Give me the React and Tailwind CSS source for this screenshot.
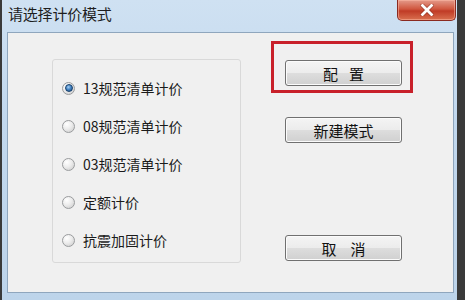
import React from "react";

const font = { fontFamily: '"Noto Sans CJK SC", "Noto Sans", sans-serif' };

function Radio({ checked, label }) {
  return (
    <div className="flex items-center h-[20px]">
      <div className="w-[13px] h-[13px] rounded-full border border-[#9a9c9e] bg-[radial-gradient(circle_at_35%_30%,#ffffff_0%,#ececec_45%,#c9c9c9_100%)] flex items-center justify-center shrink-0">
        {checked && (
          <div className="w-[8px] h-[8px] rounded-full border border-[#163f6a] bg-[radial-gradient(circle_at_40%_35%,#a8d0f4_0%,#4686c6_45%,#1c4b7e_100%)]" />
        )}
      </div>
      <span className="ml-[8px] text-[14px] text-[#1b1b1b] leading-none">{label}</span>
    </div>
  );
}

function Btn({ children, className = "" }) {
  return (
    <div
      className={
        "w-[117px] h-[26px] rounded-[3px] border border-[#707070] bg-[linear-gradient(to_bottom,#f4f4f4_0%,#ececec_48%,#dddddd_52%,#d0d0d0_100%)] shadow-[inset_0_0_0_1px_#fbfbfb] flex items-center justify-center text-[15px] text-[#111] leading-none " +
        className
      }
    >
      {children}
    </div>
  );
}

export default function App() {
  return (
    <div className="w-[465px] h-[300px] flex bg-[#3a3a3a] overflow-hidden" style={font}>
      <div className="w-[2px] bg-[#3a3a3a]" />
      <div className="w-[455px] h-[300px] flex flex-col bg-[linear-gradient(to_bottom,#cfe1f2_0%,#c2d8ee_40%,#bdd4ea_100%)] relative">
        {/* title bar */}
        <div className="h-[31px] flex items-start justify-between">
          <div className="pl-[6px] pt-[6px] text-[15px] text-[#1e1e1e] leading-none tracking-[-0.2px]">请选择计价模式</div>
          <div className="mr-[1px] w-[59px] h-[21px] rounded-b-[5px] border border-t-0 border-[#8a2a20] bg-[linear-gradient(to_bottom,#e49a8a_0%,#d0573f_45%,#c03b26_55%,#d9704f_100%)] shadow-[inset_0_0_0_1px_rgba(255,190,170,0.5)] flex items-center justify-center">
            <svg width="14" height="12" viewBox="0 0 14 12">
              <path d="M2.5 1.5 L11.5 10.5 M11.5 1.5 L2.5 10.5" stroke="#7a2418" strokeWidth="4.2" strokeLinecap="square" opacity="0.55" />
              <path d="M2.5 1.5 L11.5 10.5 M11.5 1.5 L2.5 10.5" stroke="#ffffff" strokeWidth="2.8" strokeLinecap="square" />
            </svg>
          </div>
        </div>
        {/* content */}
        <div className="ml-[5px] mr-[3px] mt-[1px] h-[261px] border border-[#8fa6bd] bg-[#f0f0f0] flex relative">
          <div className="ml-[44px] mt-[26px] w-[189px] h-[204px] border border-[#d9d9d9] rounded-[3px] flex flex-col pl-[9px] pt-[18px] gap-[18px]">
            <Radio checked label="13规范清单计价" />
            <Radio label="08规范清单计价" />
            <Radio label="03规范清单计价" />
            <Radio label="定额计价" />
            <Radio label="抗震加固计价" />
          </div>
          <div className="ml-[44px] mt-[27px] flex flex-col">
            <Btn>
              <span>配</span>
              <span className="ml-[11px]">置</span>
            </Btn>
            <Btn className="mt-[31px]">新建模式</Btn>
            <Btn className="mt-[92px]">
              <span>取</span>
              <span className="ml-[14px]">消</span>
            </Btn>
          </div>
          <div className="absolute left-[263px] top-[8px] w-[142px] h-[52px] border-[3px] border-[#c8202a]" />
        </div>
      </div>
      <div className="flex-1 bg-[#3a3a3a]" />
    </div>
  );
}
